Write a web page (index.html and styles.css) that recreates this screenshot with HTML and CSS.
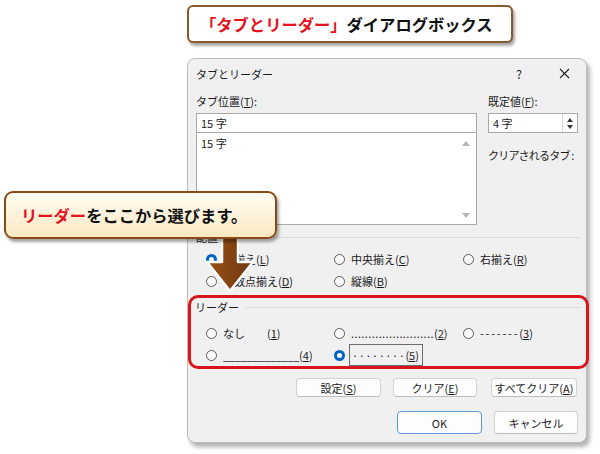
FILE: index.html
```html
<!DOCTYPE html>
<html lang="ja">

<head>
    <meta charset="UTF-8">
    <title>タブとリーダー</title>
    <link rel="stylesheet" href="styles.css">
</head>

<body>
    <div class="page">
        <div class="banner"><span class="red">「タブとリーダー」</span>ダイアログボックス</div>

        <div class="dialog">
            <div class="titlebar">
                <span class="title">タブとリーダー</span>
                <span class="tb-help">?</span>
                <span class="tb-close">
                    <svg width="11" height="11" viewBox="0 0 11 11"><path d="M1 1L10 10M10 1L1 10" stroke="#222" stroke-width="1.1" fill="none"/></svg>
                </span>
            </div>

            <div class="top">
                <div>
                    <div class="label">タブ位置(<u>T</u>):</div>
                    <div class="textbox">15 字</div>
                    <div class="listbox">
                        <div class="list-items">15 字</div>
                        <div class="scrollbar">
                            <span class="tri-up"></span>
                            <span class="tri-down"></span>
                        </div>
                    </div>
                </div>
                <div>
                    <div class="label">既定値(<u>F</u>):</div>
                    <div class="spinbox">
                        <span class="spin-value">4 字</span>
                        <span class="spin">
                            <span class="tri-up small"></span>
                            <span class="tri-down small"></span>
                        </span>
                    </div>
                    <div class="clear-label">クリアされるタブ :</div>
                </div>
            </div>

            <!-- 配置 -->
            <div class="group-head head-align"><span>配置</span><span class="rule"></span></div>
            <div class="radios radios-align">
                <label class="radio"><span class="dot on"></span>左揃え(<u>L</u>)</label>
                <label class="radio"><span class="dot"></span>中央揃え(<u>C</u>)</label>
                <label class="radio"><span class="dot"></span>右揃え(<u>R</u>)</label>
                <label class="radio"><span class="dot"></span>小数点揃え(<u>D</u>)</label>
                <label class="radio"><span class="dot"></span>縦線(<u>B</u>)</label>
            </div>

            <!-- リーダー -->
            <div class="group-head head-leader"><span>リーダー</span><span class="rule"></span></div>
            <div class="radios radios-leader">
                <label class="radio"><span class="dot"></span>なし<span class="num">(<u>1</u>)</span></label>
                <label class="radio"><span class="dot"></span><span class="dots">........................</span>(<u>2</u>)</label>
                <label class="radio"><span class="dot"></span><span class="dashes">-------</span>(<u>3</u>)</label>
                <label class="radio"><span class="dot"></span><span class="under">_____________</span>(<u>4</u>)</label>
                <label class="radio"><span class="dot on"></span><span class="focus"><span class="mid">········</span>(<u>5</u>)</span></label>
            </div>

            <div class="btnrow row-set">
                <button class="btn w85">設定(<u>S</u>)</button>
                <button class="btn w84">クリア(<u>E</u>)</button>
                <button class="btn w86 gap14">すべてクリア(<u>A</u>)</button>
            </div>
            <div class="btnrow row-ok">
                <button class="btn big ok w85">OK</button>
                <button class="btn big w84">キャンセル</button>
            </div>
        </div>

        <div class="highlight"></div>

        <svg class="arrow" width="64" height="62" viewBox="0 0 64 62">
            <defs>
                <linearGradient id="brown" x1="0" y1="0" x2="1" y2="0">
                    <stop offset="0" stop-color="#9a5318"/>
                    <stop offset="1" stop-color="#6e3510"/>
                </linearGradient>
            </defs>
            <path d="M22 0L38 0L38 26L53 26L30 55L7 26L22 26Z" fill="url(#brown)" stroke="#fff" stroke-width="2.5" stroke-linejoin="round"/>
        </svg>

        <div class="callout"><span class="red">リーダー</span>をここから選びます。</div>
    </div>
</body>

</html>
```

FILE: styles.css
```css
body {
    margin: 0;
}

.page {
    position: relative;
    width: 600px;
    height: 454px;
    overflow: hidden;
    background: #fff;
    font-family: "Noto Sans CJK JP", "DejaVu Sans", sans-serif;
    color: #1b1b1b;
}

.red {
    color: #e3141c;
}

.banner {
    margin: 5px 0 0 187px;
    width: 326px;
    height: 38px;
    box-sizing: border-box;
    border: 2.5px solid #8b5a2b;
    border-radius: 6px;
    box-shadow: 2px 3px 3px rgba(0, 0, 0, 0.35);
    padding-left: 11px;
    display: flex;
    align-items: center;
    font-weight: bold;
    font-size: 16.3px;
    color: #111;
    background: #fff;
}

/* dialog */
.dialog {
    margin: 15px 0 0 187px;
    width: 400px;
    height: 385px;
    box-sizing: border-box;
    background: #f0f0f0;
    border: 1px solid #bdbdbd;
    border-radius: 8px;
    box-shadow: 3px 4px 4px rgba(0, 0, 0, 0.3);
    padding: 0 6px 0 8px;
    font-size: 11px;
}

.titlebar {
    height: 29px;
    display: flex;
    align-items: center;
}

.tb-help {
    margin-left: auto;
    width: 32px;
    margin-right: 13px;
    text-align: center;
    font-size: 12px;
}

.tb-close {
    width: 32px;
    display: flex;
    justify-content: center;
}

.top {
    display: grid;
    grid-template-columns: 281px 92px;
    column-gap: 11px;
    margin-top: 5px;
}

.label {
    height: 16px;
    line-height: 16px;
}

.textbox {
    margin-top: 4px;
    height: 20px;
    box-sizing: border-box;
    border: 1px solid #a9a9a9;
    background: #fff;
    padding-left: 4px;
    line-height: 18px;
}

.listbox {
    margin-top: -1px;
    height: 93px;
    box-sizing: border-box;
    border: 1px solid #a9a9a9;
    background: #fff;
    display: flex;
}

.list-items {
    flex: 1;
    padding: 3px 4px;
    line-height: 14px;
}

.scrollbar {
    width: 20px;
    display: flex;
    flex-direction: column;
    justify-content: space-between;
    align-items: center;
    padding: 8px 0 6px;
}

.tri-up {
    width: 0;
    height: 0;
    border-left: 4px solid transparent;
    border-right: 4px solid transparent;
    border-bottom: 5px solid #b5b5b5;
}

.tri-down {
    width: 0;
    height: 0;
    border-left: 4px solid transparent;
    border-right: 4px solid transparent;
    border-top: 5px solid #b5b5b5;
}

.tri-up.small {
    border-left-width: 3px;
    border-right-width: 3px;
    border-bottom: 4px solid #333;
}

.tri-down.small {
    border-left-width: 3px;
    border-right-width: 3px;
    border-top: 4px solid #333;
}

.spinbox {
    margin-top: 4px;
    height: 20px;
    width: 90px;
    box-sizing: border-box;
    border: 1px solid #a9a9a9;
    background: #fff;
    display: flex;
}

.spin-value {
    flex: 1;
    padding-left: 4px;
    line-height: 18px;
}

.spin {
    width: 14px;
    border-left: 1px solid #d6d6d6;
    display: flex;
    flex-direction: column;
    justify-content: center;
    align-items: center;
    gap: 3px;
}

.clear-label {
    margin-top: 14px;
    line-height: 16px;
    white-space: nowrap;
    letter-spacing: -0.8px;
}

.group-head {
    display: flex;
    align-items: center;
    height: 16px;
    line-height: 16px;
}

.group-head .rule {
    flex: 1;
    height: 1px;
    background: #dadada;
    margin-left: 6px;
}

.head-align {
    margin-top: 4px;
}

.head-leader {
    margin-top: 7px;
    margin-left: -1px;
}

.radios {
    display: grid;
    grid-template-columns: 128px 129px 1fr;
    grid-auto-rows: 22px;
    padding-left: 10px;
}

.radios-align {
    margin-top: 3px;
}

.radios-leader {
    margin-top: 7px;
}

.radio {
    display: flex;
    align-items: center;
    white-space: nowrap;
}

.dot {
    width: 11px;
    height: 11px;
    box-sizing: border-box;
    border: 1px solid #5c5c5c;
    border-radius: 50%;
    background: #fbfbfb;
    margin-right: 6px;
}

.dot.on {
    border: 3.5px solid #0063c1;
    background: #fff;
}

.num {
    margin-left: 22px;
}

.dots {
    letter-spacing: 0.4px;
}

.dashes {
    letter-spacing: 1.8px;
}

.under {
    letter-spacing: -0.3px;
}

.mid {
    letter-spacing: 0.5px;
}

.focus {
    border: 1px solid #6b6b6b;
    padding: 2px 3px 2px 2px;
    margin-left: -2px;
    line-height: 16px;
}

/* buttons */
.btnrow {
    display: flex;
    justify-content: flex-end;
    gap: 12px;
}

.row-set {
    margin-top: 12px;
    padding-right: 3px;
}

.row-ok {
    margin-top: 14px;
    padding-right: 2px;
}

.btn {
    height: 19px;
    box-sizing: border-box;
    border: 1px solid #d2d2d2;
    border-bottom-color: #bdbdbd;
    border-radius: 4px;
    background: #fdfdfd;
    font-family: inherit;
    font-size: 11px;
    color: #1b1b1b;
    padding: 0;
}

.btn.big {
    height: 23px;
}

.btn.ok {
    border: 1px solid #5a9ad8;
}

.w84 {
    width: 84px;
}

.w85 {
    width: 85px;
}

.w86 {
    width: 86px;
}

.gap14 {
    margin-left: 2px;
}

/* annotations */
.highlight {
    position: absolute;
    left: 188px;
    top: 295px;
    width: 401px;
    height: 74px;
    box-sizing: border-box;
    border: 3px solid #d9141b;
    border-radius: 10px;
}

.arrow {
    position: absolute;
    left: 200px;
    top: 236px;
}

.callout {
    position: absolute;
    left: 4px;
    top: 191px;
    width: 273px;
    height: 48px;
    box-sizing: border-box;
    border: 2.5px solid #8a4a18;
    border-radius: 9px;
    background: linear-gradient(#fffdf3, #fbe8c2);
    box-shadow: 2px 3px 3px rgba(0, 0, 0, 0.35);
    padding-left: 15px;
    display: flex;
    align-items: center;
    font-weight: bold;
    font-size: 16.3px;
    color: #111;
}
```
